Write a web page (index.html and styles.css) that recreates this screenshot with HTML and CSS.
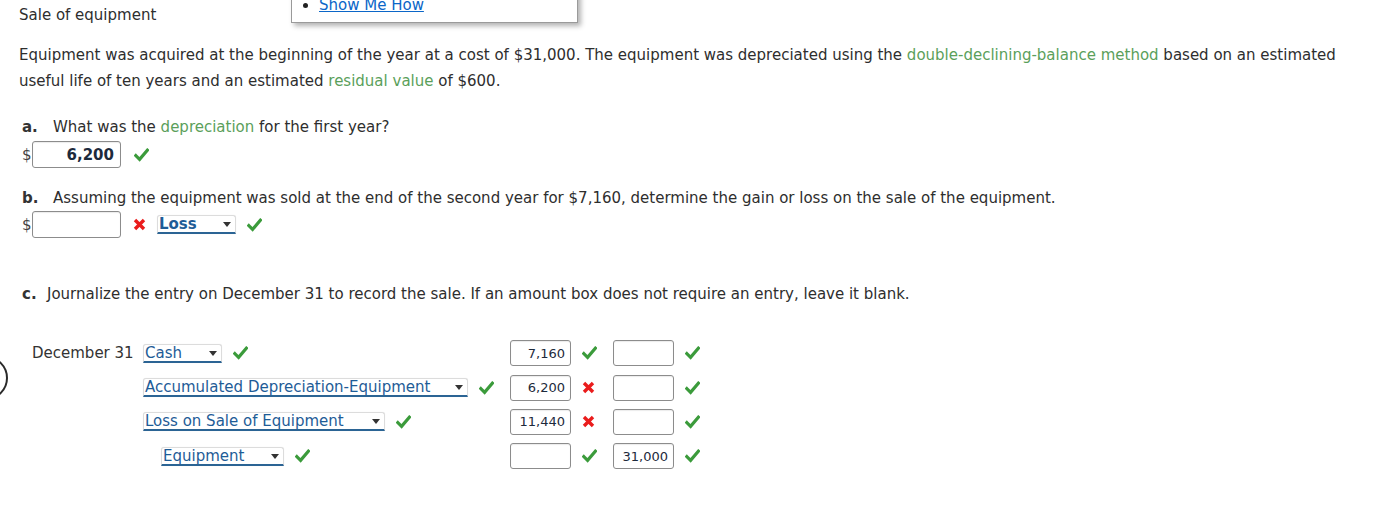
FILE: index.html
```html
<!DOCTYPE html>
<html lang="en">
<head>
<meta charset="utf-8">
<title>Sale of equipment</title>
<link rel="stylesheet" href="styles.css">
</head>
<body>
<div class="popup"><ul class="popup-list"><li><a href="#" class="popup-link">Show Me How</a></li></ul></div>
<div class="ring"></div>
<main class="page">
  <p class="title">Sale of equipment</p>
  <p class="intro">Equipment was acquired at the beginning of the year at a cost of $31,000. The equipment was depreciated using the <span class="term">double-declining-balance method</span> based on an estimated useful life of ten years and an estimated <span class="term">residual value</span> of $600.</p>

  <section class="part part-a">
    <div class="q"><b class="lbl">a.</b><span>What was the <span class="term">depreciation</span> for the first year?</span></div>
    <div class="ans">
      <span class="cur">$</span><span class="box box-lg strong">6,200</span>
      <svg class="ok ok-a" viewBox="0 0 15 14" width="15" height="14"><path d="M1.8 7.6 L5.6 11.4 L13.4 2.2" fill="none" stroke="#3b9b3b" stroke-width="3.2" stroke-linecap="square"/></svg>
    </div>
  </section>

  <section class="part part-b">
    <div class="q"><b class="lbl">b.</b><span>Assuming the equipment was sold at the end of the second year for $7,160, determine the gain or loss on the sale of the equipment.</span></div>
    <div class="ans ans-b">
      <span class="cur">$</span><span class="box box-lg"></span>
      <svg class="bad bad-b" viewBox="0 0 13 13" width="13" height="13"><path d="M2 2 L11 11 M11 2 L2 11" stroke="#ea1c1c" stroke-width="3.4"/></svg>
      <span class="select sel-loss strong">Loss<i class="caret"></i></span>
      <svg class="ok ok-b" viewBox="0 0 15 14" width="15" height="14"><path d="M1.8 7.6 L5.6 11.4 L13.4 2.2" fill="none" stroke="#3b9b3b" stroke-width="3.2" stroke-linecap="square"/></svg>
    </div>
  </section>

  <section class="part part-c">
    <div class="q"><b class="lbl lbl-c">c.</b><span>Journalize the entry on December 31 to record the sale. If an amount box does not require an entry, leave it blank.</span></div>
  </section>

  <div class="journal">
    <div class="jrow">
      <span class="jdate">December 31</span>
      <span class="jacct"><span class="select sel-cash">Cash<i class="caret"></i></span><svg class="ok" viewBox="0 0 15 14" width="15" height="14"><path d="M1.8 7.6 L5.6 11.4 L13.4 2.2" fill="none" stroke="#3b9b3b" stroke-width="3.2" stroke-linecap="square"/></svg></span>
      <span class="box box-sm">7,160</span>
      <span class="mark"><svg class="ok" viewBox="0 0 15 14" width="15" height="14"><path d="M1.8 7.6 L5.6 11.4 L13.4 2.2" fill="none" stroke="#3b9b3b" stroke-width="3.2" stroke-linecap="square"/></svg></span>
      <span class="box box-sm"></span>
      <span class="mark"><svg class="ok" viewBox="0 0 15 14" width="15" height="14"><path d="M1.8 7.6 L5.6 11.4 L13.4 2.2" fill="none" stroke="#3b9b3b" stroke-width="3.2" stroke-linecap="square"/></svg></span>
    </div>
    <div class="jrow">
      <span class="jdate"></span>
      <span class="jacct"><span class="select sel-accum">Accumulated Depreciation-Equipment<i class="caret"></i></span><svg class="ok" viewBox="0 0 15 14" width="15" height="14"><path d="M1.8 7.6 L5.6 11.4 L13.4 2.2" fill="none" stroke="#3b9b3b" stroke-width="3.2" stroke-linecap="square"/></svg></span>
      <span class="box box-sm">6,200</span>
      <span class="mark"><svg class="bad" viewBox="0 0 13 13" width="13" height="13"><path d="M2 2 L11 11 M11 2 L2 11" stroke="#ea1c1c" stroke-width="3.4"/></svg></span>
      <span class="box box-sm"></span>
      <span class="mark"><svg class="ok" viewBox="0 0 15 14" width="15" height="14"><path d="M1.8 7.6 L5.6 11.4 L13.4 2.2" fill="none" stroke="#3b9b3b" stroke-width="3.2" stroke-linecap="square"/></svg></span>
    </div>
    <div class="jrow">
      <span class="jdate"></span>
      <span class="jacct"><span class="select sel-lossacct">Loss on Sale of Equipment<i class="caret"></i></span><svg class="ok" viewBox="0 0 15 14" width="15" height="14"><path d="M1.8 7.6 L5.6 11.4 L13.4 2.2" fill="none" stroke="#3b9b3b" stroke-width="3.2" stroke-linecap="square"/></svg></span>
      <span class="box box-sm">11,440</span>
      <span class="mark"><svg class="bad" viewBox="0 0 13 13" width="13" height="13"><path d="M2 2 L11 11 M11 2 L2 11" stroke="#ea1c1c" stroke-width="3.4"/></svg></span>
      <span class="box box-sm"></span>
      <span class="mark"><svg class="ok" viewBox="0 0 15 14" width="15" height="14"><path d="M1.8 7.6 L5.6 11.4 L13.4 2.2" fill="none" stroke="#3b9b3b" stroke-width="3.2" stroke-linecap="square"/></svg></span>
    </div>
    <div class="jrow">
      <span class="jdate"></span>
      <span class="jacct indent"><span class="select sel-equip">Equipment<i class="caret"></i></span><svg class="ok" viewBox="0 0 15 14" width="15" height="14"><path d="M1.8 7.6 L5.6 11.4 L13.4 2.2" fill="none" stroke="#3b9b3b" stroke-width="3.2" stroke-linecap="square"/></svg></span>
      <span class="box box-sm"></span>
      <span class="mark"><svg class="ok" viewBox="0 0 15 14" width="15" height="14"><path d="M1.8 7.6 L5.6 11.4 L13.4 2.2" fill="none" stroke="#3b9b3b" stroke-width="3.2" stroke-linecap="square"/></svg></span>
      <span class="box box-sm">31,000</span>
      <span class="mark"><svg class="ok" viewBox="0 0 15 14" width="15" height="14"><path d="M1.8 7.6 L5.6 11.4 L13.4 2.2" fill="none" stroke="#3b9b3b" stroke-width="3.2" stroke-linecap="square"/></svg></span>
    </div>
  </div>
</main>
</body>
</html>
```

FILE: styles.css
```css
html, body {
  margin: 0;
  padding: 0;
  background: #ffffff;
}
body {
  font-family: Verdana, "DejaVu Sans", sans-serif;
  font-size: 15px;
  color: #2e2e2e;
  width: 1375px;
  height: 526px;
  overflow: hidden;
  position: relative;
}
.page {
  padding: 0 19px;
  width: 1345px;
}
.title {
  margin: 0;
  padding-top: 5px;
  line-height: 20px;
}
.intro {
  margin: 17px 0 0;
  line-height: 26px;
}
.term {
  color: #5b9f5b;
}
.part {
  padding-left: 3px;
}
.part-a { margin-top: 23px; }
.part-b { margin-top: 20px; }
.part-c { margin-top: 46px; }
.q {
  display: flex;
  line-height: 20px;
}
.lbl {
  width: 31px;
  flex: none;
  font-weight: bold;
  color: #333;
}
.lbl-c { width: 25px; }
.ans {
  display: flex;
  align-items: center;
  margin-top: 4px;
  height: 27px;
}
.ans-b { margin-top: 3px; }
.cur {
  width: 10px;
  color: #444;
}
.box {
  box-sizing: border-box;
  border: 1px solid #8c8c8c;
  border-radius: 3px;
  background: #fff;
  box-shadow: inset 0 1px 1px rgba(0,0,0,0.08);
  display: flex;
  align-items: center;
  justify-content: flex-end;
  color: #1d2a3c;
}
.box-lg {
  width: 89px;
  height: 27px;
  padding-right: 6px;
}
.strong { font-weight: bold; }
.box-sm {
  width: 61px;
  height: 26px;
  padding-right: 5px;
  font-size: 13px;
}
.ok, .bad { display: block; flex: none; }
.ok-a { margin-left: 13px; }
.bad-b { margin-left: 12px; }
.select {
  position: relative;
  box-sizing: border-box;
  display: inline-flex;
  align-items: center;
  height: 19px;
  padding-left: 1px;
  border: 1px solid #dcdcdc;
  border-bottom: 2px solid #2b6494;
  border-radius: 3px 3px 0 0;
  color: #1e5c97;
  line-height: 16px;
  background: #fff;
  box-shadow: 0 0 1px rgba(0,0,0,0.1);
}
.caret {
  position: absolute;
  right: 4px;
  top: 6px;
  width: 0;
  height: 0;
  border-left: 4px solid transparent;
  border-right: 4px solid transparent;
  border-top: 5px solid #333;
}
.sel-loss { width: 79px; margin-left: 11px; }
.ok-b { margin-left: 11px; }
.journal {
  margin-top: 32px;
  margin-left: 13px;
  display: flex;
  flex-direction: column;
}
.jrow {
  display: grid;
  grid-template-columns: 111px 367px 61px 42px 61px 30px;
  align-items: center;
  height: 34.4px;
}
.jdate { color: #333; }
.jacct {
  display: flex;
  align-items: center;
  gap: 11px;
}
.indent { padding-left: 18px; }
.sel-cash { width: 79px; }
.sel-accum { width: 325px; }
.sel-lossacct { width: 242px; }
.sel-equip { width: 123px; }
.mark {
  display: flex;
  padding-left: 11px;
}
.popup {
  position: absolute;
  left: 291px;
  top: -30px;
  width: 287px;
  height: 53px;
  box-sizing: border-box;
  border: 1px solid #9a9a9a;
  background: #fff;
  box-shadow: 3px 3px 5px rgba(0,0,0,0.3);
}
.popup-list {
  margin: 0;
  padding: 0 0 0 27px;
  position: absolute;
  top: 25px;
  left: 0;
  line-height: 18px;
  color: #222;
  font-size: 15px;
}
.popup-link {
  color: #0b66c8;
  text-decoration: underline;
}
.ring {
  position: absolute;
  left: -36px;
  top: 356px;
  width: 40px;
  height: 40px;
  border: 2px solid #2a2a2a;
  border-radius: 50%;
}
```
